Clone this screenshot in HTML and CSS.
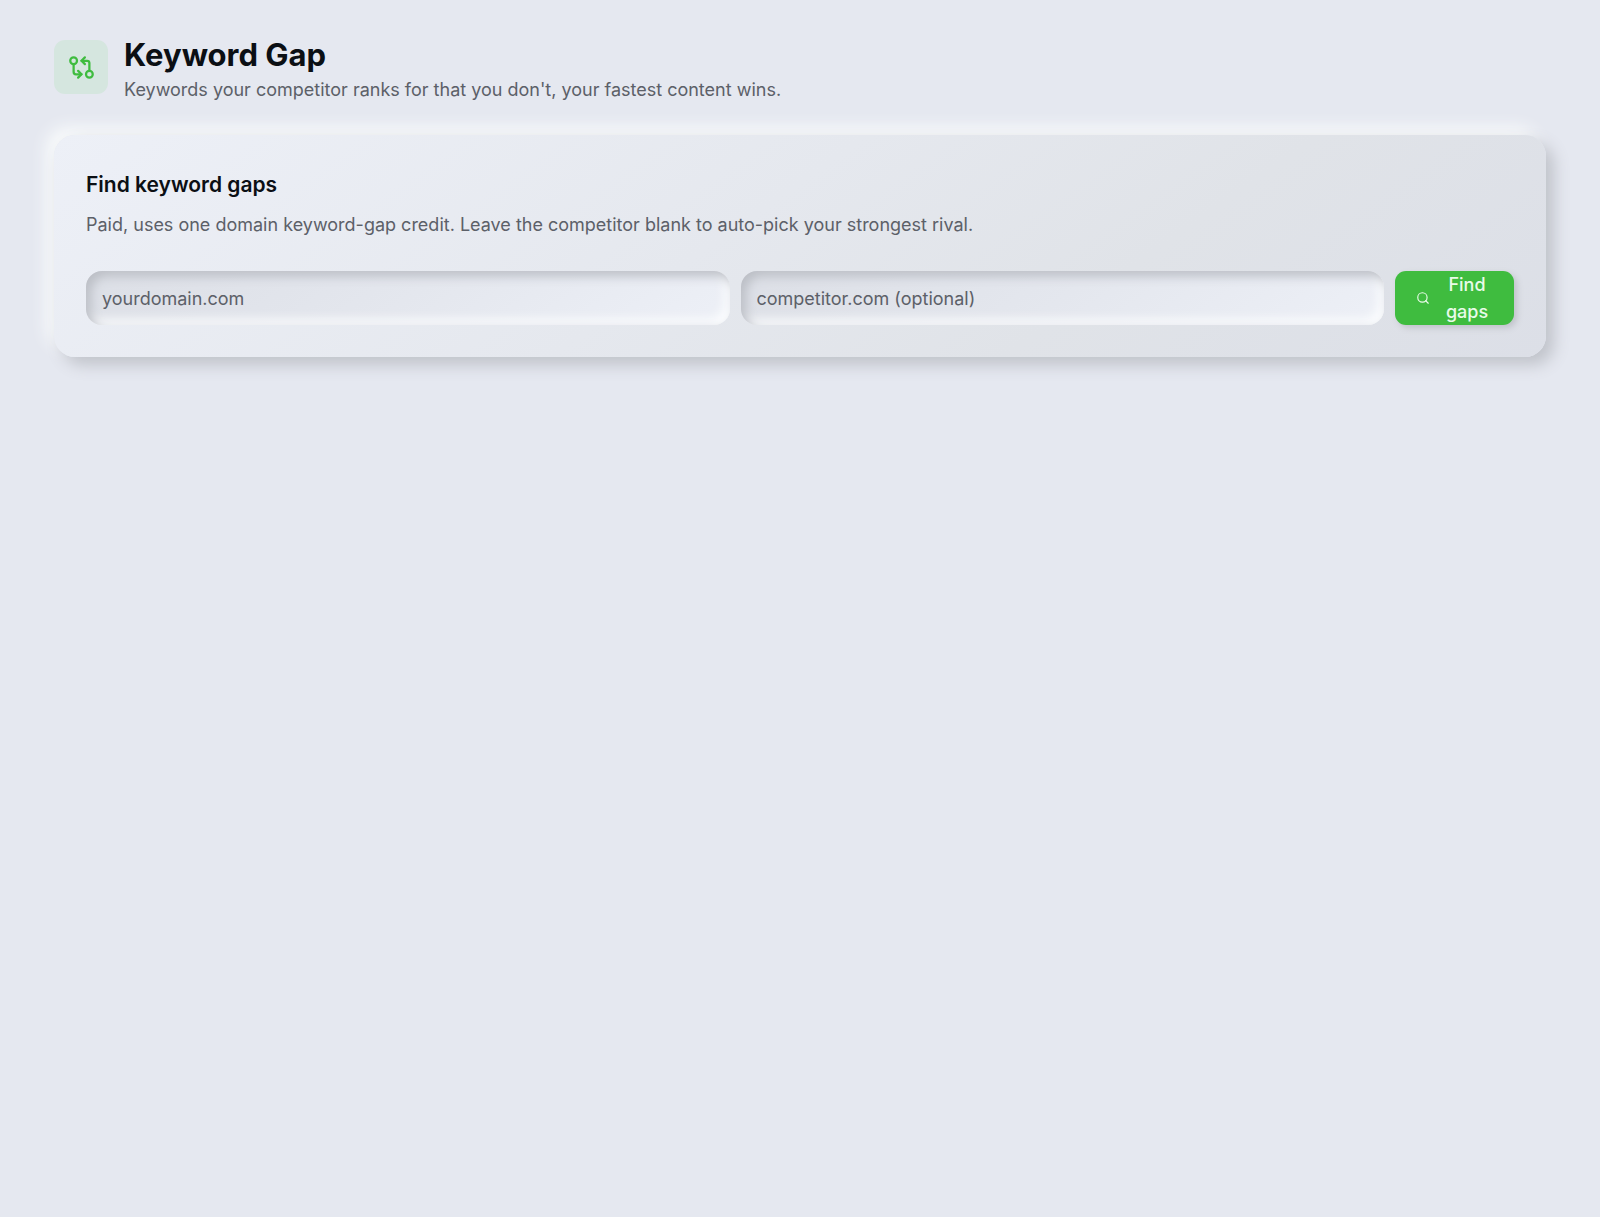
FILE: index.html
```html
<!DOCTYPE html>
<html lang="en">
  <head>
    <meta charset="UTF-8" />
    <meta name="viewport" content="width=device-width, initial-scale=1.0" />
    <title>Keyword Gap</title>
    <link rel="stylesheet" href="styles.css">
  </head>
  <body>
    <header class="page-header">
      <div class="page-icon">
        <svg viewBox="0 0 24 24" aria-hidden="true">
          <circle cx="5" cy="6" r="3" />
          <path d="M12 6h5a2 2 0 0 1 2 2v7" />
          <path d="m15 9-3-3 3-3" />
          <circle cx="19" cy="18" r="3" />
          <path d="M12 18H7a2 2 0 0 1-2-2V9" />
          <path d="m9 15 3 3-3 3" />
        </svg>
      </div>
      <div>
        <h1>Keyword Gap</h1>
        <p>Keywords your competitor ranks for that you don't, your fastest content wins.</p>
      </div>
    </header>

    <main class="card">
      <h2>Find keyword gaps</h2>
      <p>Paid, uses one domain keyword-gap credit. Leave the competitor blank to auto-pick your strongest rival.</p>
      <form class="gap-form">
        <input type="text" name="domain" placeholder="yourdomain.com" aria-label="Your domain" />
        <input type="text" name="competitor" placeholder="competitor.com (optional)" aria-label="Competitor domain" />
        <button type="submit" class="find-btn">
          <svg viewBox="0 0 24 24" aria-hidden="true">
            <circle cx="11" cy="11" r="8" />
            <path d="m21 21-4.3-4.3" />
          </svg>
          <span>Find gaps</span>
        </button>
      </form>
    </main>
  </body>
</html>
```
FILE: styles.css
```css
* {
  box-sizing: border-box;
}
body {
  margin: 0;
  padding: 35px 54px;
  min-height: 100vh;
  background: #e5e8f0;
  color: #0b0f14;
  font-family: Inter, sans-serif;
  font-size: 18px;
  line-height: 27px;
}
h1,
h2,
p {
  margin: 0;
}
p {
  color: #5c6068;
}
svg {
  fill: none;
  stroke: currentColor;
  stroke-width: 2;
  stroke-linecap: round;
  stroke-linejoin: round;
  flex-shrink: 0;
}

/* Header */
.page-header {
  display: flex;
  align-items: flex-start;
  gap: 16px;
  margin-bottom: 32px;
}
.page-icon {
  display: flex;
  justify-content: center;
  align-items: center;
  flex-shrink: 0;
  width: 54px;
  height: 54px;
  margin-top: 5px;
  border-radius: 11px;
  background: #d5e6df;
  color: #3fbc3f;
}
.page-icon svg {
  width: 27px;
  height: 27px;
}
h1 {
  margin-bottom: 2px;
  font-size: 31px;
  line-height: 39px;
  font-weight: 700;
}

/* Card */
.card {
  padding: 32px;
  border-radius: 21px;
  background: linear-gradient(145deg, #edf0f7, #e5e8ee 45%, #e0e3e8 70%, #dcdfe7);
  box-shadow: 8px 8px 16px #c0c3ca, -8px -8px 16px #f8fafb;
}
h2 {
  margin-bottom: 8px;
  font-size: 21px;
  line-height: 36px;
  font-weight: 600;
}
.gap-form {
  display: flex;
  gap: 11px;
  margin-top: 33px;
}
.gap-form input {
  flex: 1;
  min-width: 0;
  height: 54px;
  padding: 0 16px;
  border: none;
  border-radius: 16px;
  background: linear-gradient(145deg, #dcdfe6, #e4e7ee 50%, #edf0f7);
  box-shadow: inset 5px 5px 11px #bbbec5, inset -5px -5px 11px #fdfeff;
  color: #0b0f14;
  font: inherit;
}
.gap-form input::placeholder {
  color: #5c6068;
  opacity: 1;
}
.find-btn {
  display: flex;
  justify-content: center;
  align-items: center;
  gap: 11px;
  width: 119px;
  height: 54px;
  padding: 0 21px;
  border: none;
  border-radius: 11px;
  background: #3fbc3f;
  box-shadow: 3px 3px 6px #c0c3ca;
  color: #e9fbe9;
  font: inherit;
  font-weight: 500;
  cursor: pointer;
}
.find-btn svg {
  width: 14px;
  height: 14px;
}
```
